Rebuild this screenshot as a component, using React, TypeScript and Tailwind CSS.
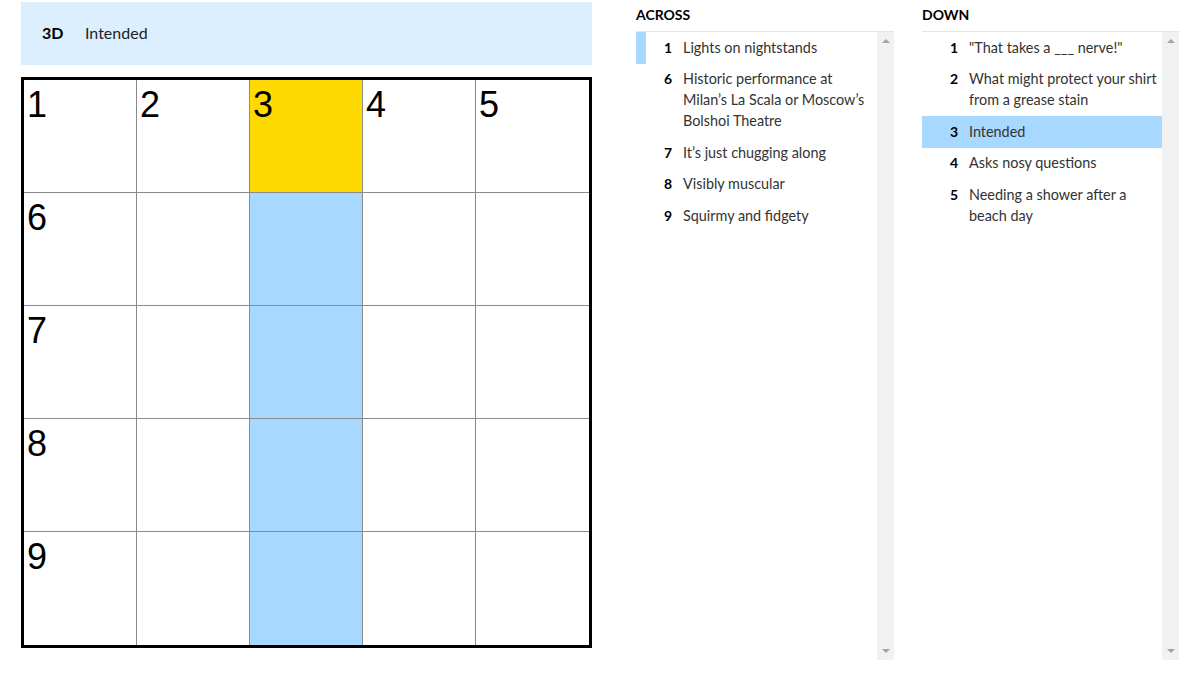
import React from "react";

type Clue = { n: number; text: string };

const ACROSS: Clue[] = [
  { n: 1, text: "Lights on nightstands" },
  { n: 6, text: "Historic performance at Milan’s La Scala or Moscow’s Bolshoi Theatre" },
  { n: 7, text: "It’s just chugging along" },
  { n: 8, text: "Visibly muscular" },
  { n: 9, text: "Squirmy and fidgety" },
];

const DOWN: Clue[] = [
  { n: 1, text: '"That takes a ___ nerve!"' },
  { n: 2, text: "What might protect your shirt from a grease stain" },
  { n: 3, text: "Intended" },
  { n: 4, text: "Asks nosy questions" },
  { n: 5, text: "Needing a shower after a beach day" },
];

const NUMBERS: Record<number, number> = { 0: 1, 1: 2, 2: 3, 3: 4, 4: 5, 5: 6, 10: 7, 15: 8, 20: 9 };

function Cell({ i }: { i: number }) {
  const row = Math.floor(i / 5);
  const col = i % 5;
  const bg = i === 2 ? "bg-[#ffda00]" : col === 2 ? "bg-[#a7d8ff]" : "bg-white";
  return (
    <div
      className={`relative ${bg} ${col < 4 ? "border-r border-r-[#8a8a8a]" : ""} ${
        row < 4 ? "border-b border-b-[#8a8a8a]" : ""
      }`}
    >
      {NUMBERS[i] !== undefined && (
        <span className="absolute left-[3px] top-[7px] text-[36px] leading-none text-black font-['Liberation_Sans',Arial,sans-serif]">
          {NUMBERS[i]}
        </span>
      )}
    </div>
  );
}

function Scrollbar() {
  return (
    <div className="flex w-[17px] flex-col items-center justify-between bg-[#f1f1f1] py-[7px]">
      <div className="h-0 w-0 border-x-[4px] border-b-[4px] border-x-transparent border-b-[#a3a3a3]" />
      <div className="h-0 w-0 border-x-[4px] border-t-[4px] border-x-transparent border-t-[#a3a3a3]" />
    </div>
  );
}

function ClueList({
  title,
  clues,
  active,
  mark,
  width,
}: {
  title: string;
  clues: Clue[];
  active?: number;
  mark?: number;
  width: string;
}) {
  return (
    <div className={`flex flex-col ${width}`}>
      <div className="h-[31px] pt-[6px] text-[14px] font-bold leading-[18px] text-black">{title}</div>
      <div className="flex h-[629px] border-t border-t-[#e6e6e6]">
        <ul className="flex-1">
          {clues.map((c) => (
            <li
              key={c.n}
              className={`flex pt-[4.5px] pb-[6px] ${c.n === active ? "bg-[#a7d8ff]" : ""} ${
                c.n === mark ? "border-l-[10px] border-l-[#a7d8ff]" : "border-l-[10px] border-l-transparent"
              }`}
            >
              <span className="w-[26px] shrink-0 text-right text-[14px] font-bold leading-[21px] text-black">
                {c.n}
              </span>
              <span className="pl-[11px] pr-[2px] text-[14.4px] leading-[21px] text-[#333]">{c.text}</span>
            </li>
          ))}
        </ul>
        <Scrollbar />
      </div>
    </div>
  );
}

export default function App() {
  return (
    <div className="flex h-[675px] w-[1200px] bg-white font-['Lato','Noto_Sans',sans-serif]">
      <div className="ml-[21px] flex w-[571px] flex-col pt-[2px]">
        <div className="flex h-[63px] items-center bg-[#dcefff] px-[21px] pb-[1px] text-[16px]">
          <span className="w-[43px] font-bold text-black">3D</span>
          <span className="text-[#222]">Intended</span>
        </div>
        <div className="mt-[12px] grid h-[571px] w-[571px] grid-cols-5 grid-rows-5 border-[3px] border-black">
          {Array.from({ length: 25 }, (_, i) => (
            <Cell key={i} i={i} />
          ))}
        </div>
      </div>
      <div className="ml-[44px] flex gap-[28px]">
        <ClueList title="ACROSS" clues={ACROSS} mark={1} width="w-[258px]" />
        <ClueList title="DOWN" clues={DOWN} active={3} width="w-[257px]" />
      </div>
    </div>
  );
}
